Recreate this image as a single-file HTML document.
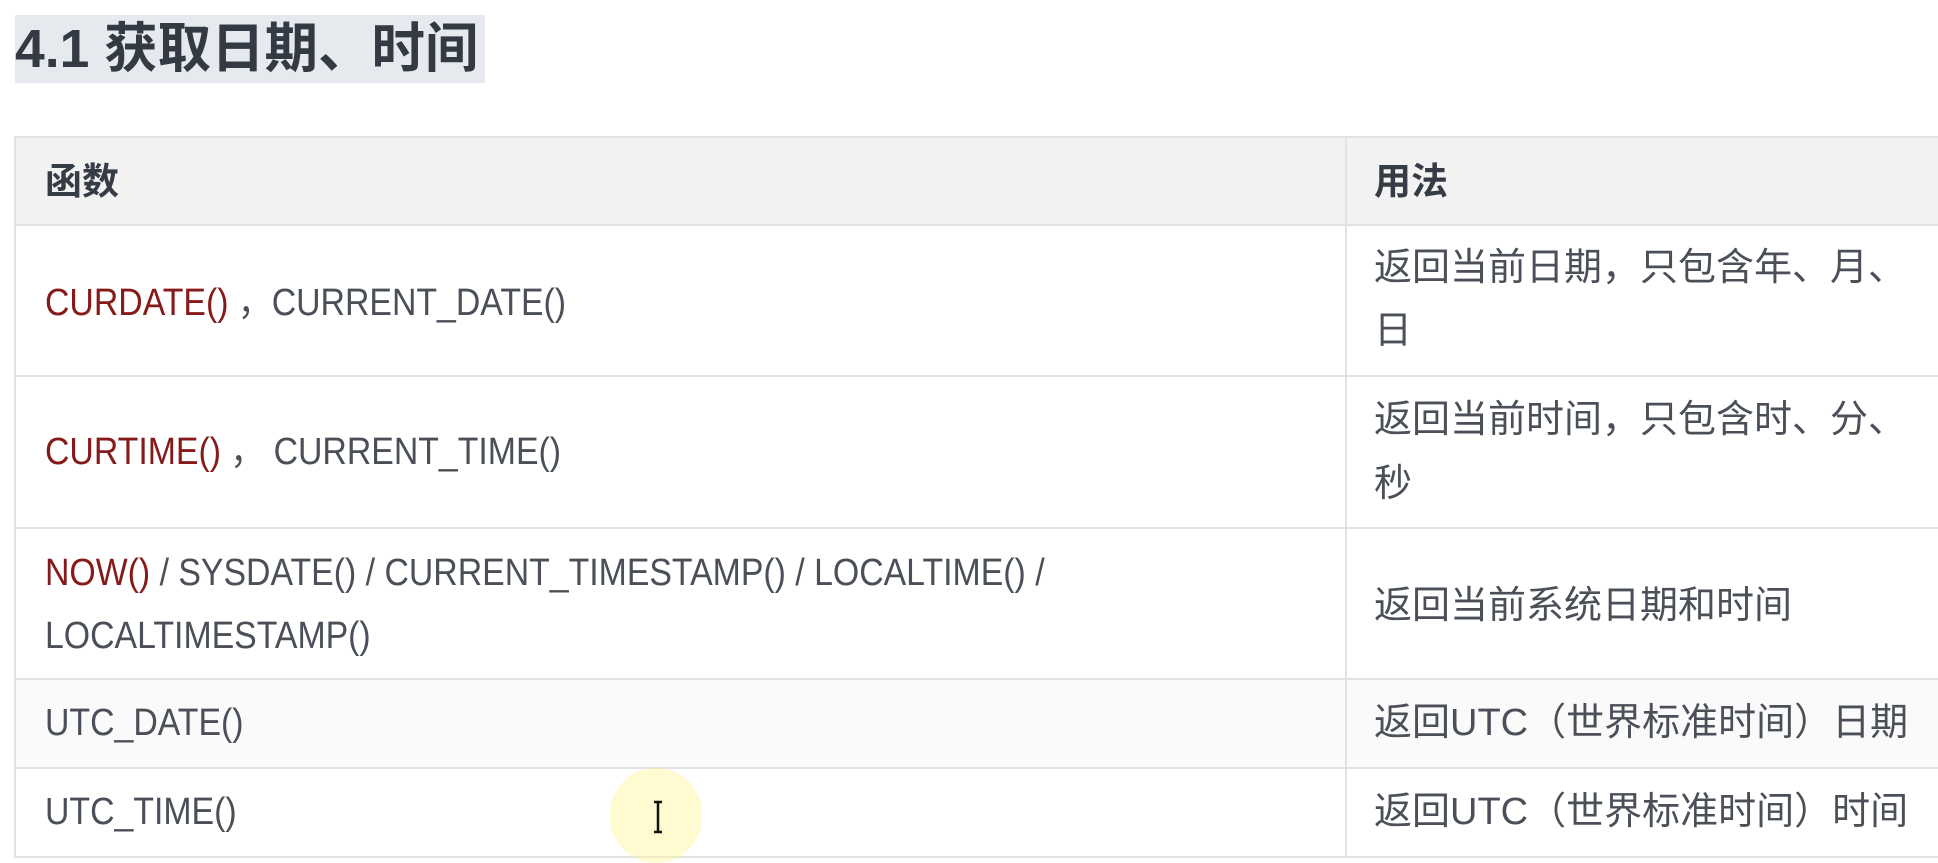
<!DOCTYPE html>
<html><head><meta charset="utf-8"><style>
body{margin:0;width:1938px;height:863px;background:#fff;overflow:hidden;position:relative;font-family:"Liberation Sans","Noto Sans CJK SC",sans-serif;color:#4a4f58}
.a{position:absolute;white-space:nowrap}
.t{left:15px;top:15px;width:470px;height:68px;background:#e6e9ee}
.tt{left:15px;top:15px;line-height:68px;font-size:54px;font-weight:bold;color:#333a44;transform:scaleX(0.99);transform-origin:left center}
.line{position:absolute;background:#e2e2e2}
.l{font-size:38px;line-height:44px;transform:scaleX(0.89);transform-origin:left center}
.c{font-size:38px;line-height:44px}
.r{color:#861a1a}
.h{font-weight:bold;color:#363c46;font-size:37px}
</style></head><body>
<div class="a t"></div>
<div class="a tt">4.1 获取日期、时间</div>

<div class="a" style="left:15px;top:136px;width:1923px;height:89px;background:#f2f2f2"></div>
<div class="a" style="left:15px;top:679px;width:1923px;height:89px;background:#fafafa"></div>
<div class="line" style="left:15px;top:136px;width:1923px;height:2px"></div>
<div class="line" style="left:15px;top:224px;width:1923px;height:2px"></div>
<div class="line" style="left:15px;top:375px;width:1923px;height:2px"></div>
<div class="line" style="left:15px;top:527px;width:1923px;height:2px"></div>
<div class="line" style="left:15px;top:678px;width:1923px;height:2px"></div>
<div class="line" style="left:15px;top:767px;width:1923px;height:2px"></div>
<div class="line" style="left:15px;top:856px;width:1923px;height:2px"></div>
<div class="line" style="left:14px;top:136px;width:2px;height:722px"></div>
<div class="line" style="left:1345px;top:136px;width:2px;height:722px"></div>

<div class="a c h" style="left:45px;top:160px">函数</div>
<div class="a c h" style="left:1374px;top:160px">用法</div>

<div class="a l" style="left:45px;top:281px"><span class="r">CURDATE()</span> ，CURRENT_DATE()</div>
<div class="a c" style="left:1374px;top:246px">返回当前日期，只包含年、月、</div>
<div class="a c" style="left:1374px;top:309px">日</div>

<div class="a l" style="left:45px;top:430px"><span class="r">CURTIME()</span> ，&nbsp;CURRENT_TIME()</div>
<div class="a c" style="left:1374px;top:398px">返回当前时间，只包含时、分、</div>
<div class="a c" style="left:1374px;top:462px">秒</div>

<div class="a l" style="left:45px;top:551px"><span class="r">NOW()</span> / SYSDATE() / CURRENT_TIMESTAMP() / LOCALTIME() /</div>
<div class="a l" style="left:45px;top:614px">LOCALTIMESTAMP()</div>
<div class="a c" style="left:1374px;top:584px">返回当前系统日期和时间</div>

<div class="a l" style="left:45px;top:701px">UTC_DATE()</div>
<div class="a c" style="left:1374px;top:701px">返回UTC（世界标准时间）日期</div>

<div class="a" style="left:610px;top:768px;width:92px;height:95px;border-radius:46px;background:rgba(255,245,150,0.45)"></div>
<div class="a l" style="left:45px;top:790px">UTC_TIME()</div>
<div class="a c" style="left:1374px;top:790px">返回UTC（世界标准时间）时间</div>
<svg class="a" style="left:651px;top:800px" width="14" height="34" viewBox="0 0 14 34"><path d="M3 2h8M7 2v30M3 32h8" stroke="#111" stroke-width="2.5" fill="none"/></svg>
</body></html>
